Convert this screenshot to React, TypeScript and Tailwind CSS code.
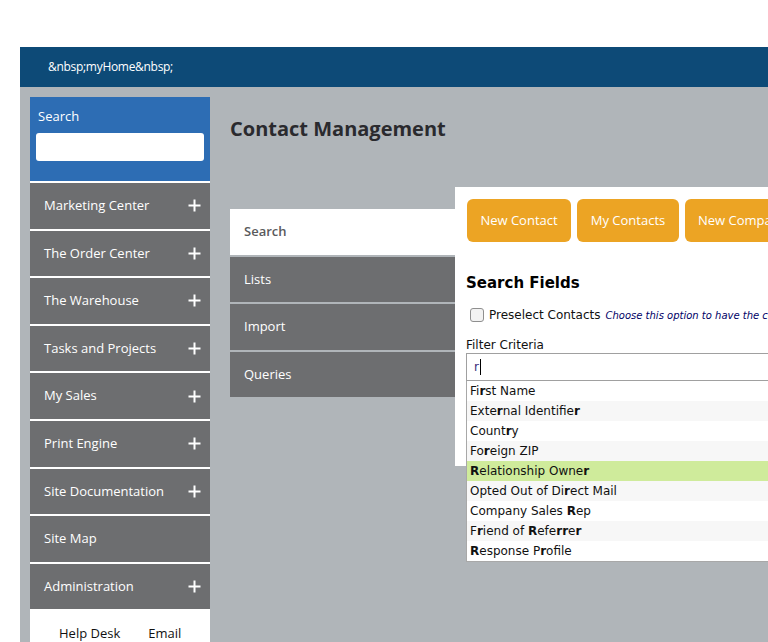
import React from "react";

const MENU = [
  { label: "Marketing Center", plus: true },
  { label: "The Order Center", plus: true },
  { label: "The Warehouse", plus: true },
  { label: "Tasks and Projects", plus: true },
  { label: "My Sales", plus: true },
  { label: "Print Engine", plus: true },
  { label: "Site Documentation", plus: true },
  { label: "Site Map", plus: false },
  { label: "Administration", plus: true },
];

const TABS = ["Search", "Lists", "Import", "Queries"];

// matched letters are wrapped in [ ]
const RESULTS = [
  "Fi[r]st Name",
  "Exte[r]nal Identifie[r]",
  "Count[r]y",
  "Fo[r]eign ZIP",
  "[R]elationship Owne[r]",
  "Opted Out of Di[r]ect Mail",
  "Company Sales [R]ep",
  "F[r]iend of [R]efe[r][r]e[r]",
  "[R]esponse P[r]ofile",
];

function Plus() {
  return (
    <svg width="13" height="13" viewBox="0 0 13 13" aria-hidden>
      <path d="M6.5 0.5v12M0.5 6.5h12" stroke="white" strokeWidth="2" />
    </svg>
  );
}

function Highlight({ text }: { text: string }) {
  const parts = text.split(/(\[[^\]]+\])/).filter(Boolean);
  return (
    <span className="whitespace-pre">
      {parts.map((p, i) =>
        p.startsWith("[") ? (
          <b key={i} className="font-bold">
            {p.slice(1, -1)}
          </b>
        ) : (
          <React.Fragment key={i}>{p}</React.Fragment>
        )
      )}
    </span>
  );
}

export default function App() {
  return (
    <div className="h-[642px] w-[768px] overflow-hidden bg-white pl-[20px] pt-[47px] font-['Open_Sans',sans-serif]">
      {/* top bar */}
      <div className="flex h-[40px] items-center bg-[#0d4a77] pl-[28px] text-[12px] tracking-[-0.3px] text-white">
        &amp;nbsp;myHome&amp;nbsp;
      </div>

      <div className="flex h-full items-start bg-[#b0b5b9] pl-[10px] pt-[10px]">
        {/* sidebar */}
        <div className="flex w-[180px] shrink-0 flex-col gap-[2px] bg-white">
          <div className="flex h-[84px] flex-col bg-[#2d6db4] px-[6px] pt-[10px]">
            <div className="pl-[2px] text-[13px] text-white">Search</div>
            <input className="mt-[6px] h-[28px] w-full rounded-[3px] bg-white outline-none" />
          </div>
          {MENU.map((m) => (
            <div
              key={m.label}
              className="flex h-[45.6px] items-center justify-between bg-[#6d6e70] pl-[14px] pr-[9px] text-[13px] text-white"
            >
              <span>{m.label}</span>
              {m.plus && <Plus />}
            </div>
          ))}
          <div className="flex h-[40px] gap-[28px] bg-white pl-[29px] pt-[13px] text-[13px] text-[#111]">
            <span>Help Desk</span>
            <span>Email</span>
          </div>
        </div>

        {/* main */}
        <div className="min-w-0 flex-1 pl-[20px]">
          <h1 className="pt-[19px] text-[20px] font-bold leading-[26px] text-[#2a2a2e]">
            Contact Management
          </h1>

          <div className="mt-[45px] flex items-start">
            <div className="mt-[22px] flex w-[225px] shrink-0 flex-col gap-[2px]">
              {TABS.map((t, i) => (
                <div
                  key={t}
                  className={
                    i === 0
                      ? "flex h-[45.5px] items-center bg-white pl-[14px] text-[13px] font-semibold text-[#5a5a5c]"
                      : "flex h-[45.5px] items-center bg-[#6d6e70] pl-[14px] text-[13px] text-white"
                  }
                >
                  {t}
                </div>
              ))}
            </div>

            <div className="relative h-[279px] min-w-0 flex-1 bg-white pl-[11px] pt-[12px]">
              <div className="ml-[1px] flex gap-[6px] whitespace-nowrap">
                <div className="flex h-[43px] w-[104px] shrink-0 items-center justify-center rounded-[6px] bg-[#eca424] text-[13px] text-white">
                  New Contact
                </div>
                <div className="flex h-[43px] w-[102px] shrink-0 items-center justify-center rounded-[6px] bg-[#eca424] text-[13px] text-white">
                  My Contacts
                </div>
                <div className="flex h-[43px] w-[120px] shrink-0 items-center rounded-[6px] bg-[#eca424] pl-[13px] text-[13px] text-white">
                  New Company
                </div>
              </div>

              <div className="mt-[31px] font-['DejaVu_Sans',sans-serif] text-[15px] font-bold leading-[20px] text-black">
                Search Fields
              </div>

              <div className="mt-[13px] flex items-center whitespace-nowrap">
                <span className="ml-[4px] h-[14px] w-[14px] shrink-0 rounded-[3px] border border-[#8f8f8f] bg-[#f2f2f2]" />
                <span className="ml-[5px] font-['DejaVu_Sans',sans-serif] text-[12px] text-[#111]">
                  Preselect Contacts
                </span>
                <span className="ml-[5px] font-['DejaVu_Sans',sans-serif] text-[10px] italic text-[#000066]">
                  Choose this option to have the checked contacts preselected
                </span>
              </div>

              <div className="mt-[14px] font-['DejaVu_Sans',sans-serif] text-[12px] leading-[15px] text-[#111]">
                Filter Criteria
              </div>

              <div className="relative w-[420px]">
                <div className="flex h-[28px] items-center border border-[#a0a0a0] pl-[7px] font-['DejaVu_Sans',sans-serif] text-[12px] text-[#3a2d7a]">
                  r<span className="ml-[1px] h-[16px] w-[1px] bg-black" />
                </div>
                <div className="absolute left-0 top-full z-10 w-full border-b border-l border-[#a8a8a8] bg-white font-['DejaVu_Sans',sans-serif] text-[12px] text-[#111]">
                  {RESULTS.map((r, i) => (
                    <div
                      key={r}
                      className={
                        i === 4
                          ? "flex h-[20px] items-center bg-[#cfeb9b] pl-[3px]"
                          : i % 2 === 1
                          ? "flex h-[20px] items-center bg-[#f7f7f7] pl-[3px]"
                          : "flex h-[20px] items-center bg-white pl-[3px]"
                      }
                    >
                      <Highlight text={r} />
                    </div>
                  ))}
                </div>
              </div>
            </div>
          </div>
        </div>
      </div>
    </div>
  );
}
